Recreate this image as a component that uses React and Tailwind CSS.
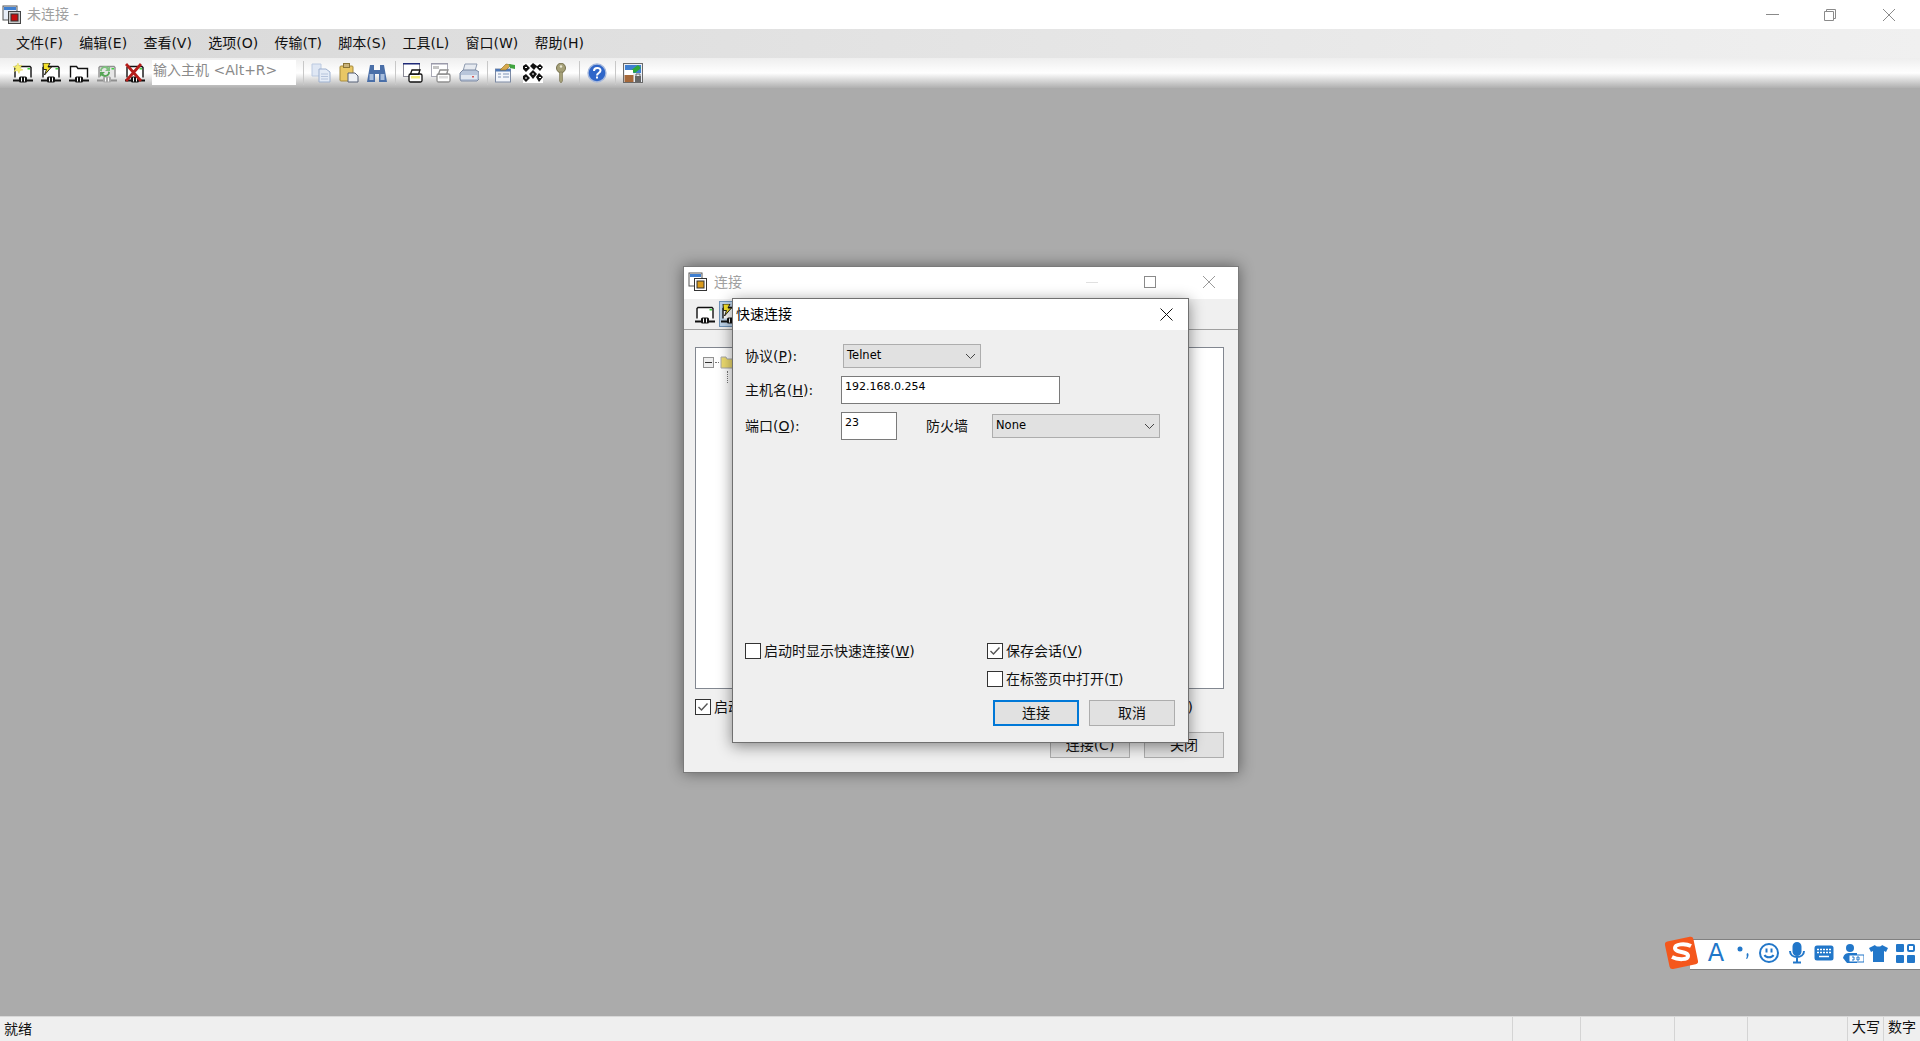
import React from "react";

const font = { fontFamily: '"DejaVu Sans", "Noto Sans CJK SC", sans-serif' };

/* ---------- toolbar icons ---------- */
function Server({ children, dim }) {
  const line = dim ? "#8f8f8f" : "#111";
  return (
    <svg className="w-5 h-5 shrink-0" viewBox="0 0 20 20">
      <path d="M2 14.500V4.500l1-1h14l1 1v10" fill={dim ? "#e6e6e6" : "#fff"} stroke={line} strokeWidth="1.400" />
      <rect x="14.500" y="5" width="2.500" height="1.500" fill="#3fd23f" />
      <path d="M0 17.500h20" stroke={line} strokeWidth="2" />
      <rect x="6" y="13.500" width="8" height="6" rx="1.500" fill={dim ? "#a8a8a8" : "#111"} />
      <path d="M8.500 14.500v4M11.500 14.500v4" stroke="#fff" strokeWidth="1" />
      {children}
    </svg>
  );
}

function IconNew() {
  return (
    <Server>
      <path d="M5 0l1 3 3-1-2 3 3 2-3 .5-1 3-1.500-3-3.500 1 2-3-3-2 3.500-.5z" fill="#f6ee72" stroke="#d9cf4a" strokeWidth="0.4" />
    </Server>
  );
}

function IconBolt() {
  return (
    <Server>
      <path d="M2 0h7L7 4h3.500l-7 8 2-5.500H2.500z" fill="#f5e12a" stroke="#111" strokeWidth="0.9" />
    </Server>
  );
}

function IconFolderServer() {
  return (
    <svg className="w-5 h-5" viewBox="0 0 20 20">
      <path d="M1.500 14.500V3.500h6l1.500 2h9.500v9" fill="#fff" stroke="#111" strokeWidth="1.400" />
      <path d="M0 17.500h20" stroke="#111" strokeWidth="2" />
      <rect x="6" y="13.500" width="8" height="6" rx="1.500" fill="#111" />
      <path d="M8.500 14.500v4M11.500 14.500v4" stroke="#fff" />
    </svg>
  );
}

function IconReconnect() {
  return (
    <Server dim>
      <path d="M3 8a5 5 0 0 1 8.500-3.500L13 3v5H8l1.800-1.800A2.700 2.700 0 0 0 5 8.500z" fill="#7fc07f" />
      <path d="M13 9a5 5 0 0 1-8.500 3.500L3 14V9h5l-1.800 1.800A2.700 2.700 0 0 0 11 8.500z" fill="#57a657" />
    </Server>
  );
}

function IconDisconnect() {
  return (
    <Server>
      <path d="M1 1l15 17M16 1L1 18" stroke="#b51d1a" strokeWidth="2.800" />
    </Server>
  );
}

function IconCopy() {
  return (
    <svg className="w-5 h-5" viewBox="0 0 20 20">
      <path d="M1 1h9v12H1z" fill="#dfe7f4" stroke="#bccae0" />
      <path d="M8 6h7l4 3v10H8z" fill="#e4ebf6" stroke="#9db0cf" />
      <path d="M10 11h7M10 13.500h7M10 16h7" stroke="#b6c4dc" />
    </svg>
  );
}

function IconPaste() {
  return (
    <svg className="w-5 h-5" viewBox="0 0 20 20">
      <rect x="1" y="3" width="13" height="15" rx="1" fill="#e9c766" stroke="#a58a3c" />
      <rect x="4.500" y="0.500" width="6" height="4" fill="#c9b27a" stroke="#8a7436" />
      <path d="M9 10h7l3 3v6H9z" fill="#eef1f6" stroke="#555f75" />
    </svg>
  );
}

function IconFind() {
  return (
    <svg className="w-5 h-5" viewBox="0 0 20 20">
      <path d="M3 2h4v5h6V2h4l3 17h-8v-8H8v8H0z" fill="#4a6fa8" />
      <rect x="2.500" y="11" width="4" height="6" fill="#a8bedd" />
      <rect x="13.500" y="11" width="4" height="6" fill="#a8bedd" />
    </svg>
  );
}

function IconPrintWin({ dim }) {
  const c = dim ? "#8f8f8f" : "#111";
  return (
    <svg className="w-5 h-5" viewBox="0 0 20 20">
      <rect x="0.500" y="0.500" width="16" height="13" fill="#fff" stroke={dim ? "#a9a9b5" : "#8a8a96"} />
      <rect x="0" y="0" width="17" height="1.500" fill={dim ? "#9a9aaa" : "#1f2a78"} />
      {dim && <rect x="2" y="3" width="6" height="3" fill="#c4c4c4" />}
      <rect x="6" y="11" width="13" height="8" rx="1.500" fill="#fff" stroke={c} strokeWidth="1.300" />
      <path d="M9 7h8l-1.500 4H7.500z" fill="#fff" stroke={c} strokeWidth="1.300" />
      <rect x="8" y="13" width="9" height="2.500" fill={dim ? "#ddd" : "#f2ec7a"} />
    </svg>
  );
}

function IconPrinter() {
  return (
    <svg className="w-5 h-5" viewBox="0 0 20 20">
      <path d="M6 1h12l-2 7H4z" fill="#e6eaf0" stroke="#8f9bb0" />
      <path d="M1 10l3-3h13l3 2v7l-2 2H2l-1-2z" fill="#b9c6db" stroke="#7c8aa3" />
      <rect x="2" y="12" width="16" height="4" fill="#e2e8f1" />
      <rect x="13" y="13" width="2" height="1.500" fill="#d45a5a" />
    </svg>
  );
}

function IconOptions() {
  return (
    <svg className="w-5 h-5" viewBox="0 0 20 20">
      <rect x="0.500" y="6" width="15" height="13" fill="#f3f6fb" stroke="#7c8aa3" />
      <rect x="0.500" y="6" width="15" height="2.500" fill="#4f78b5" />
      <path d="M3 11h3M8 11h6M3 14h3M8 14h6" stroke="#7f93b5" />
      <path d="M5 7l6-6 5 1-5 5z" fill="#d7a94c" stroke="#8a6a24" strokeWidth="0.6" />
      <path d="M14 1l6 1v4l-5-1z" fill="#3fa33f" />
    </svg>
  );
}

function IconMap() {
  return (
    <svg className="w-5 h-5" viewBox="0 0 20 20">
      <rect width="20" height="20" fill="#fff" />
      <path d="M3 1l4 4-4 4-3-3V3zM10 0l4 3-3 4-4-4zM17 1l3 3-3 4-4-4zM10 7l4 4-4 5-4-5zM3 11l4 4-4 4-3-3v-3zM16 10l4 4-4 5-3-5z" fill="#111" />
      <path d="M2 4.500h2M16 4.500h2M9 11h2M16 14.500h2M2 15h2" stroke="#fff" />
    </svg>
  );
}

function IconKey() {
  return (
    <svg className="w-5 h-5" viewBox="0 0 20 20">
      <ellipse cx="10" cy="5" rx="4.500" ry="4.800" fill="#a5a078" stroke="#77724f" />
      <circle cx="10" cy="3.500" r="1.200" fill="#e8e6d2" />
      <path d="M8.500 9h3v9l-1.500 2-1.500-2z" fill="#a5a078" stroke="#77724f" strokeWidth="0.6" />
    </svg>
  );
}

function IconHelp() {
  return (
    <svg className="w-5 h-5" viewBox="0 0 20 20">
      <circle cx="10" cy="10" r="9" fill="#2f66c9" stroke="#a7b9dc" strokeWidth="1.400" />
      <path d="M7 8c0-4 6.500-4 6.500-.5 0 2.500-3.500 2.500-3.500 5" fill="none" stroke="#fff" strokeWidth="2" />
      <rect x="9" y="13.500" width="2" height="2" fill="#fff" />
    </svg>
  );
}

function IconLock() {
  return (
    <svg className="w-5 h-5" viewBox="0 0 20 20">
      <rect x="0.500" y="0.500" width="19" height="19" fill="#e9edf4" stroke="#6a6a6a" />
      <rect x="2" y="2" width="16" height="8" fill="#3f7fd0" />
      <path d="M7 8l8-6 3 3-6 5z" fill="#2ea83a" />
      <path d="M2 7h8v5H2z" fill="#fff" />
      <rect x="1.500" y="12" width="9" height="7" fill="#a5683a" />
      <rect x="12" y="13" width="6" height="6" fill="#666" />
      <path d="M13 13v-2h4v2" fill="none" stroke="#666" />
    </svg>
  );
}

function Sep() {
  return <div className="w-px h-6 bg-[#c8c8c8] shrink-0 -mr-px" />;
}

/* ---------- win10 style controls ---------- */
function Underlined({ label, hot }) {
  return (
    <>
      {label}(<span className="underline">{hot}</span>)
    </>
  );
}

function Chevron() {
  return (
    <svg className="w-[11px] h-[7px]" viewBox="0 0 11 7" fill="none" stroke="#444">
      <path d="M1 1l4.500 4.500L10 1" />
    </svg>
  );
}

function Combo({ value, className }) {
  return (
    <div className={`h-[24px] flex items-center justify-between pl-[3px] pr-[4px] bg-[#e1e1e1] border border-[#adadad] text-[11.500px] text-black ${className}`}>
      <span>{value}</span>
      <Chevron />
    </div>
  );
}

function Check({ checked }) {
  return (
    <span className="w-[16px] h-[16px] shrink-0 flex items-center justify-center bg-white border border-[#333]">
      {checked && (
        <svg className="w-[12px] h-[12px]" viewBox="0 0 12 12" fill="none" stroke="#555" strokeWidth="1.400">
          <path d="M1.500 6l3 3L10.500 2.500" />
        </svg>
      )}
    </span>
  );
}

function Option({ checked, children }) {
  return (
    <div className="flex items-center gap-[3px] h-[16px] text-[14px] text-[#111]">
      <Check checked={checked} />
      <span>{children}</span>
    </div>
  );
}

function Btn({ children, className = "" }) {
  return (
    <div className={`flex items-center justify-center bg-[#e1e1e1] text-[14px] text-[#111] border ${className}`}>
      {children}
    </div>
  );
}

/* ---------- back dialog ---------- */
function ConnectDialog() {
  return (
    <div className="absolute left-[683px] top-[178px] w-[556px] h-[507px] flex flex-col bg-[#f0f0f0] border border-[#7a7a7a] shadow-[0_0_14px_rgba(0,0,0,0.45)]">
      <div className="h-[32px] shrink-0 bg-white flex items-center justify-between pl-[4px] pb-[2px]">
        <div className="flex items-center gap-[6px] text-[14px] text-[#a0a0a0]">
          <svg className="w-5 h-5" viewBox="0 0 20 20">
            <rect x="1" y="1" width="13" height="13" fill="#fff" stroke="#555" />
            <rect x="2" y="2" width="11" height="3" fill="#3f7fd0" />
            <rect x="6.500" y="6.500" width="12" height="12" fill="#fff" stroke="#333" />
            <rect x="9" y="9" width="7" height="7" fill="#d99a1c" stroke="#333" />
          </svg>
          连接
        </div>
        <div className="flex items-center pr-[23px]">
          <div className="w-[12px] h-px bg-[#e0e0e0] mr-[46px]" />
          <div className="w-[12px] h-[12px] border border-[#8a8a8a] mr-[47px]" />
          <svg className="w-[12px] h-[12px]" viewBox="0 0 12 12" stroke="#9a9a9a" fill="none"><path d="M0 0l12 12M12 0L0 12" /></svg>
        </div>
      </div>
      <div className="h-[31px] shrink-0 flex items-center pl-[11px] gap-[4px] border-b border-[#a0a0a0]">
        <Server />
        <div className="w-[24px] h-[26px] flex items-center justify-center bg-[#bcd2e8] border border-[#6f93b8]"><IconBolt /></div>
      </div>
      <div className="flex-1 flex flex-col pl-[11px] pr-[14px] pt-[17px]">
        <div className="h-[342px] shrink-0 bg-white border border-[#828790] pl-[7px] pt-[6px]">
          <div className="flex items-center gap-[1px]">
            <span className="w-[11px] h-[11px] border border-[#919191] bg-[#eee] flex items-center justify-center">
              <span className="w-[7px] h-px bg-[#333]" />
            </span>
            <span className="w-[4px] border-t border-dotted border-[#777]" />
            <svg className="w-4 h-4" viewBox="0 0 16 16"><path d="M1 3h5l1 2h8v9H1z" fill="#eedc70" stroke="#a8a8a8" /></svg>
          </div>
          <div className="ml-[24px] mt-[1px] h-[12px] border-l border-dotted border-[#777]" />
        </div>
        <div className="flex items-center justify-between h-[16px] mt-[10px] pr-[31px]">
          <Option checked>启动</Option>
          <span className="text-[14px] text-[#111]">)</span>
        </div>
        <div className="flex justify-end gap-[14px] mt-[17px]">
          <Btn className="w-[80px] h-[26px] border-[#adadad]">连接(C)</Btn>
          <Btn className="w-[80px] h-[26px] border-[#adadad]">关闭</Btn>
        </div>
      </div>
    </div>
  );
}

/* ---------- quick connect dialog ---------- */
function QuickConnect() {
  return (
    <div className="absolute left-[732px] top-[210px] w-[457px] h-[445px] flex flex-col bg-[#efefef] border border-[#707070] shadow-[0_3px_14px_rgba(0,0,0,0.45)]">
      <div className="h-[31px] shrink-0 bg-white flex items-center justify-between pl-[3px] pr-[15px] text-[14px] text-black">
        快速连接
        <svg className="w-[13px] h-[13px]" viewBox="0 0 13 13" stroke="#111" fill="none"><path d="M0.500 0.500l12 12M12.500 0.500l-12 12" /></svg>
      </div>
      <div className="flex-1 flex flex-col pl-[12px] pt-[14px] text-[14px] text-[#111]">
        <div className="flex items-center h-[24px]">
          <span className="w-[98px]"><Underlined label="协议" hot="P" />:</span>
          <Combo value="Telnet" className="w-[138px]" />
        </div>
        <div className="flex items-center h-[28px] mt-[8px]">
          <span className="w-[96px]"><Underlined label="主机名" hot="H" />:</span>
          <div className="w-[219px] h-[28px] bg-white border border-[#7a7a7a] pl-[3px] text-[11px] leading-[20px] text-black">192.168.0.254</div>
        </div>
        <div className="flex items-center h-[28px] mt-[8px]">
          <span className="w-[96px]"><Underlined label="端口" hot="O" />:</span>
          <div className="w-[56px] h-[28px] bg-white border border-[#7a7a7a] pl-[3px] text-[11px] leading-[20px] text-black">23</div>
          <span className="ml-[29px] w-[66px]">防火墙</span>
          <Combo value="None" className="w-[168px]" />
        </div>
        <div className="flex mt-[203px]">
          <div className="w-[242px]"><Option><Underlined label="启动时显示快速连接" hot="W" /></Option></div>
          <div className="flex flex-col gap-[12px]">
            <Option checked><Underlined label="保存会话" hot="V" /></Option>
            <Option><Underlined label="在标签页中打开" hot="T" /></Option>
          </div>
        </div>
        <div className="flex gap-[10px] ml-[248px] mt-[13px]">
          <Btn className="w-[86px] h-[26px] border-2 border-[#0078d7]">连接</Btn>
          <Btn className="w-[86px] h-[26px] border-[#adadad]">取消</Btn>
        </div>
      </div>
    </div>
  );
}

/* ---------- sogou IME bar ---------- */
function ImeBar() {
  return (
    <div className="absolute right-0 top-[848px] w-[256px] h-[34px] flex items-center">
      <div className="absolute left-[26px] right-0 top-[3px] h-[31px] bg-white border-y border-[#808080]" />
      <svg className="relative w-[36px] h-[34px] shrink-0" viewBox="0 0 36 34">
        <rect x="3" y="3" width="29" height="28" rx="3" transform="rotate(-12 17 17)" fill="#f4571c" />
        <path d="M27 10c-6-3-16-2-16 2 0 5 13 3 13 8 0 4-10 4-16 1" fill="none" stroke="#fff" strokeWidth="4" />
      </svg>
      <div className="relative flex items-center text-[#2277c9]">
        <span className="ml-[7px] w-[18px] text-[24px] leading-none text-center">A</span>
        <svg className="ml-[12px] w-[13px] h-[16px]" viewBox="0 0 13 16" fill="#2277c9">
          <circle cx="3" cy="4" r="2.500" />
          <path d="M10 8c2 0 2 3 0 6l-1-.5c1-1.500 1-2.500 .5-3.500z" />
        </svg>
        <svg className="ml-[9px] w-[20px] h-[20px]" viewBox="0 0 20 20" fill="none" stroke="#2277c9" strokeWidth="2">
          <circle cx="10" cy="10" r="9" />
          <path d="M7.500 5.500v4M12.500 5.500v4M5.500 12c1.500 3 7.500 3 9 0" />
        </svg>
        <svg className="ml-[10px] w-[16px] h-[22px]" viewBox="0 0 16 22" fill="none" stroke="#2277c9" strokeWidth="2">
          <rect x="4.500" y="1" width="7" height="12" rx="3.500" fill="#2277c9" />
          <path d="M1 9c0 8 14 8 14 0M8 15v5M4 20.500h8" />
        </svg>
        <svg className="ml-[9px] w-[20px] h-[16px]" viewBox="0 0 20 16">
          <rect x="0.500" y="0.500" width="19" height="15" rx="2.500" fill="#2277c9" />
          <path d="M3 4.500h14M3 7.500h14" stroke="#fff" strokeWidth="1.500" strokeDasharray="2 1" />
          <path d="M5 11.500h10" stroke="#fff" strokeWidth="1.500" />
        </svg>
        <svg className="ml-[9px] w-[21px] h-[19px]" viewBox="0 0 21 19" fill="#2277c9">
          <circle cx="7" cy="4" r="4" />
          <path d="M0 14c1-4 3-5 7-5h7v10H4z" />
          <rect x="6" y="11" width="15" height="7" fill="#fff" stroke="#2277c9" />
          <path d="M9 13h2v3H9M14 13h2v3h-2z" fill="none" stroke="#2277c9" />
        </svg>
        <svg className="ml-[5px] w-[19px] h-[19px]" viewBox="0 0 19 19" fill="#2277c9">
          <path d="M6 1c1 2 6 2 7 0l6 3-2 4-2-1v11H4V7L2 8 0 4z" />
        </svg>
        <svg className="ml-[8px] w-[19px] h-[19px]" viewBox="0 0 19 19" fill="#2277c9">
          <rect width="8" height="8" rx="1" />
          <rect x="12" y="1" width="6" height="6" rx="1" fill="none" stroke="#2277c9" strokeWidth="2" />
          <rect y="11" width="8" height="8" rx="1" />
          <rect x="11" y="11" width="8" height="8" rx="1" />
        </svg>
      </div>
    </div>
  );
}

const menus = [
  ["文件", "F"], ["编辑", "E"], ["查看", "V"], ["选项", "O"], ["传输", "T"],
  ["脚本", "S"], ["工具", "L"], ["窗口", "W"], ["帮助", "H"],
];

export default function App() {
  return (
    <div className="w-[1920px] h-[1041px] flex flex-col overflow-hidden bg-[#ababab]" style={font}>
      {/* Title bar */}
      <div className="h-[29px] shrink-0 bg-white flex items-center justify-between pl-[2px] text-[14px] text-[#a0a0a0]">
        <div className="flex items-center gap-[5px]">
          <svg className="w-5 h-5" viewBox="0 0 20 20">
            <rect x="1" y="1" width="14" height="14" fill="#e8eef8" stroke="#555" />
            <rect x="2" y="2" width="12" height="3" fill="#3f7fd0" />
            <rect x="6.500" y="6.500" width="12" height="12" fill="#c8c8c8" stroke="#444" />
            <rect x="9" y="9" width="7" height="7" fill="#c40d0d" stroke="#333" />
          </svg>
          未连接 -
        </div>
        <div className="flex items-center pr-[25px]">
          <div className="w-[13px] h-px bg-[#8a8a8a] mr-[45px]" />
          <svg className="w-[12px] h-[12px] mr-[47px]" viewBox="0 0 12 12" fill="none" stroke="#8a8a8a">
            <path d="M0.500 2.500h9v9h-9zM2.500 2.500V0.500h9v9H9.500" />
          </svg>
          <svg className="w-[12px] h-[12px]" viewBox="0 0 12 12" fill="none" stroke="#8a8a8a"><path d="M0 0l12 12M12 0L0 12" /></svg>
        </div>
      </div>

      {/* Menu bar */}
      <div className="h-[29px] shrink-0 bg-gradient-to-r from-[#d8d8d8] to-[#f0f0f0] flex items-center pl-[16px] gap-[16.300px] text-[14px] text-[#111]">
        {menus.map(([label, hot]) => (
          <span key={hot}>{label}({hot})</span>
        ))}
      </div>

      {/* Toolbar */}
      <div className="h-[30px] shrink-0 flex items-center pl-[13px] bg-gradient-to-b from-[#eeeeee] via-white to-[#b0b0b0]">
        <div className="flex items-center gap-[8px]">
          <IconNew />
          <IconBolt />
          <IconFolderServer />
          <IconReconnect />
          <IconDisconnect />
        </div>
        <div className="ml-[7px] w-[144px] h-[25px] self-end mb-[3px] bg-white pl-[1px] text-[14px] leading-[20px] text-[#8a8a8a]">{"输入主机 <Alt+R>"}</div>
        <div className="flex items-center gap-[8px] ml-[7px]">
          <Sep />
          <IconCopy />
          <IconPaste />
          <IconFind />
          <Sep />
          <IconPrintWin />
          <IconPrintWin dim />
          <IconPrinter />
          <Sep />
          <IconOptions />
          <IconMap />
          <IconKey />
          <Sep />
          <IconHelp />
          <Sep />
          <IconLock />
        </div>
      </div>

      {/* Desktop area */}
      <div className="relative flex-1">
        <ConnectDialog />
        <QuickConnect />
        <ImeBar />
      </div>

      {/* Status bar */}
      <div className="h-[25px] shrink-0 flex items-center bg-[#efefef] border-t border-[#d8d8d8] text-[14px] text-[#111]">
        <span className="flex-1 pl-[4px]">就绪</span>
        <span className="w-[68px] h-full border-l border-[#d4d4d4]" />
        <span className="w-[94px] h-full border-l border-[#d4d4d4]" />
        <span className="w-[73px] h-full border-l border-[#d4d4d4]" />
        <span className="w-[100px] h-full border-l border-[#d4d4d4]" />
        <span className="w-[36px] h-full border-l border-[#d4d4d4] pl-[4px]">大写</span>
        <span className="w-[37px] h-full border-l border-[#d4d4d4] pl-[4px]">数字</span>
      </div>
    </div>
  );
}
